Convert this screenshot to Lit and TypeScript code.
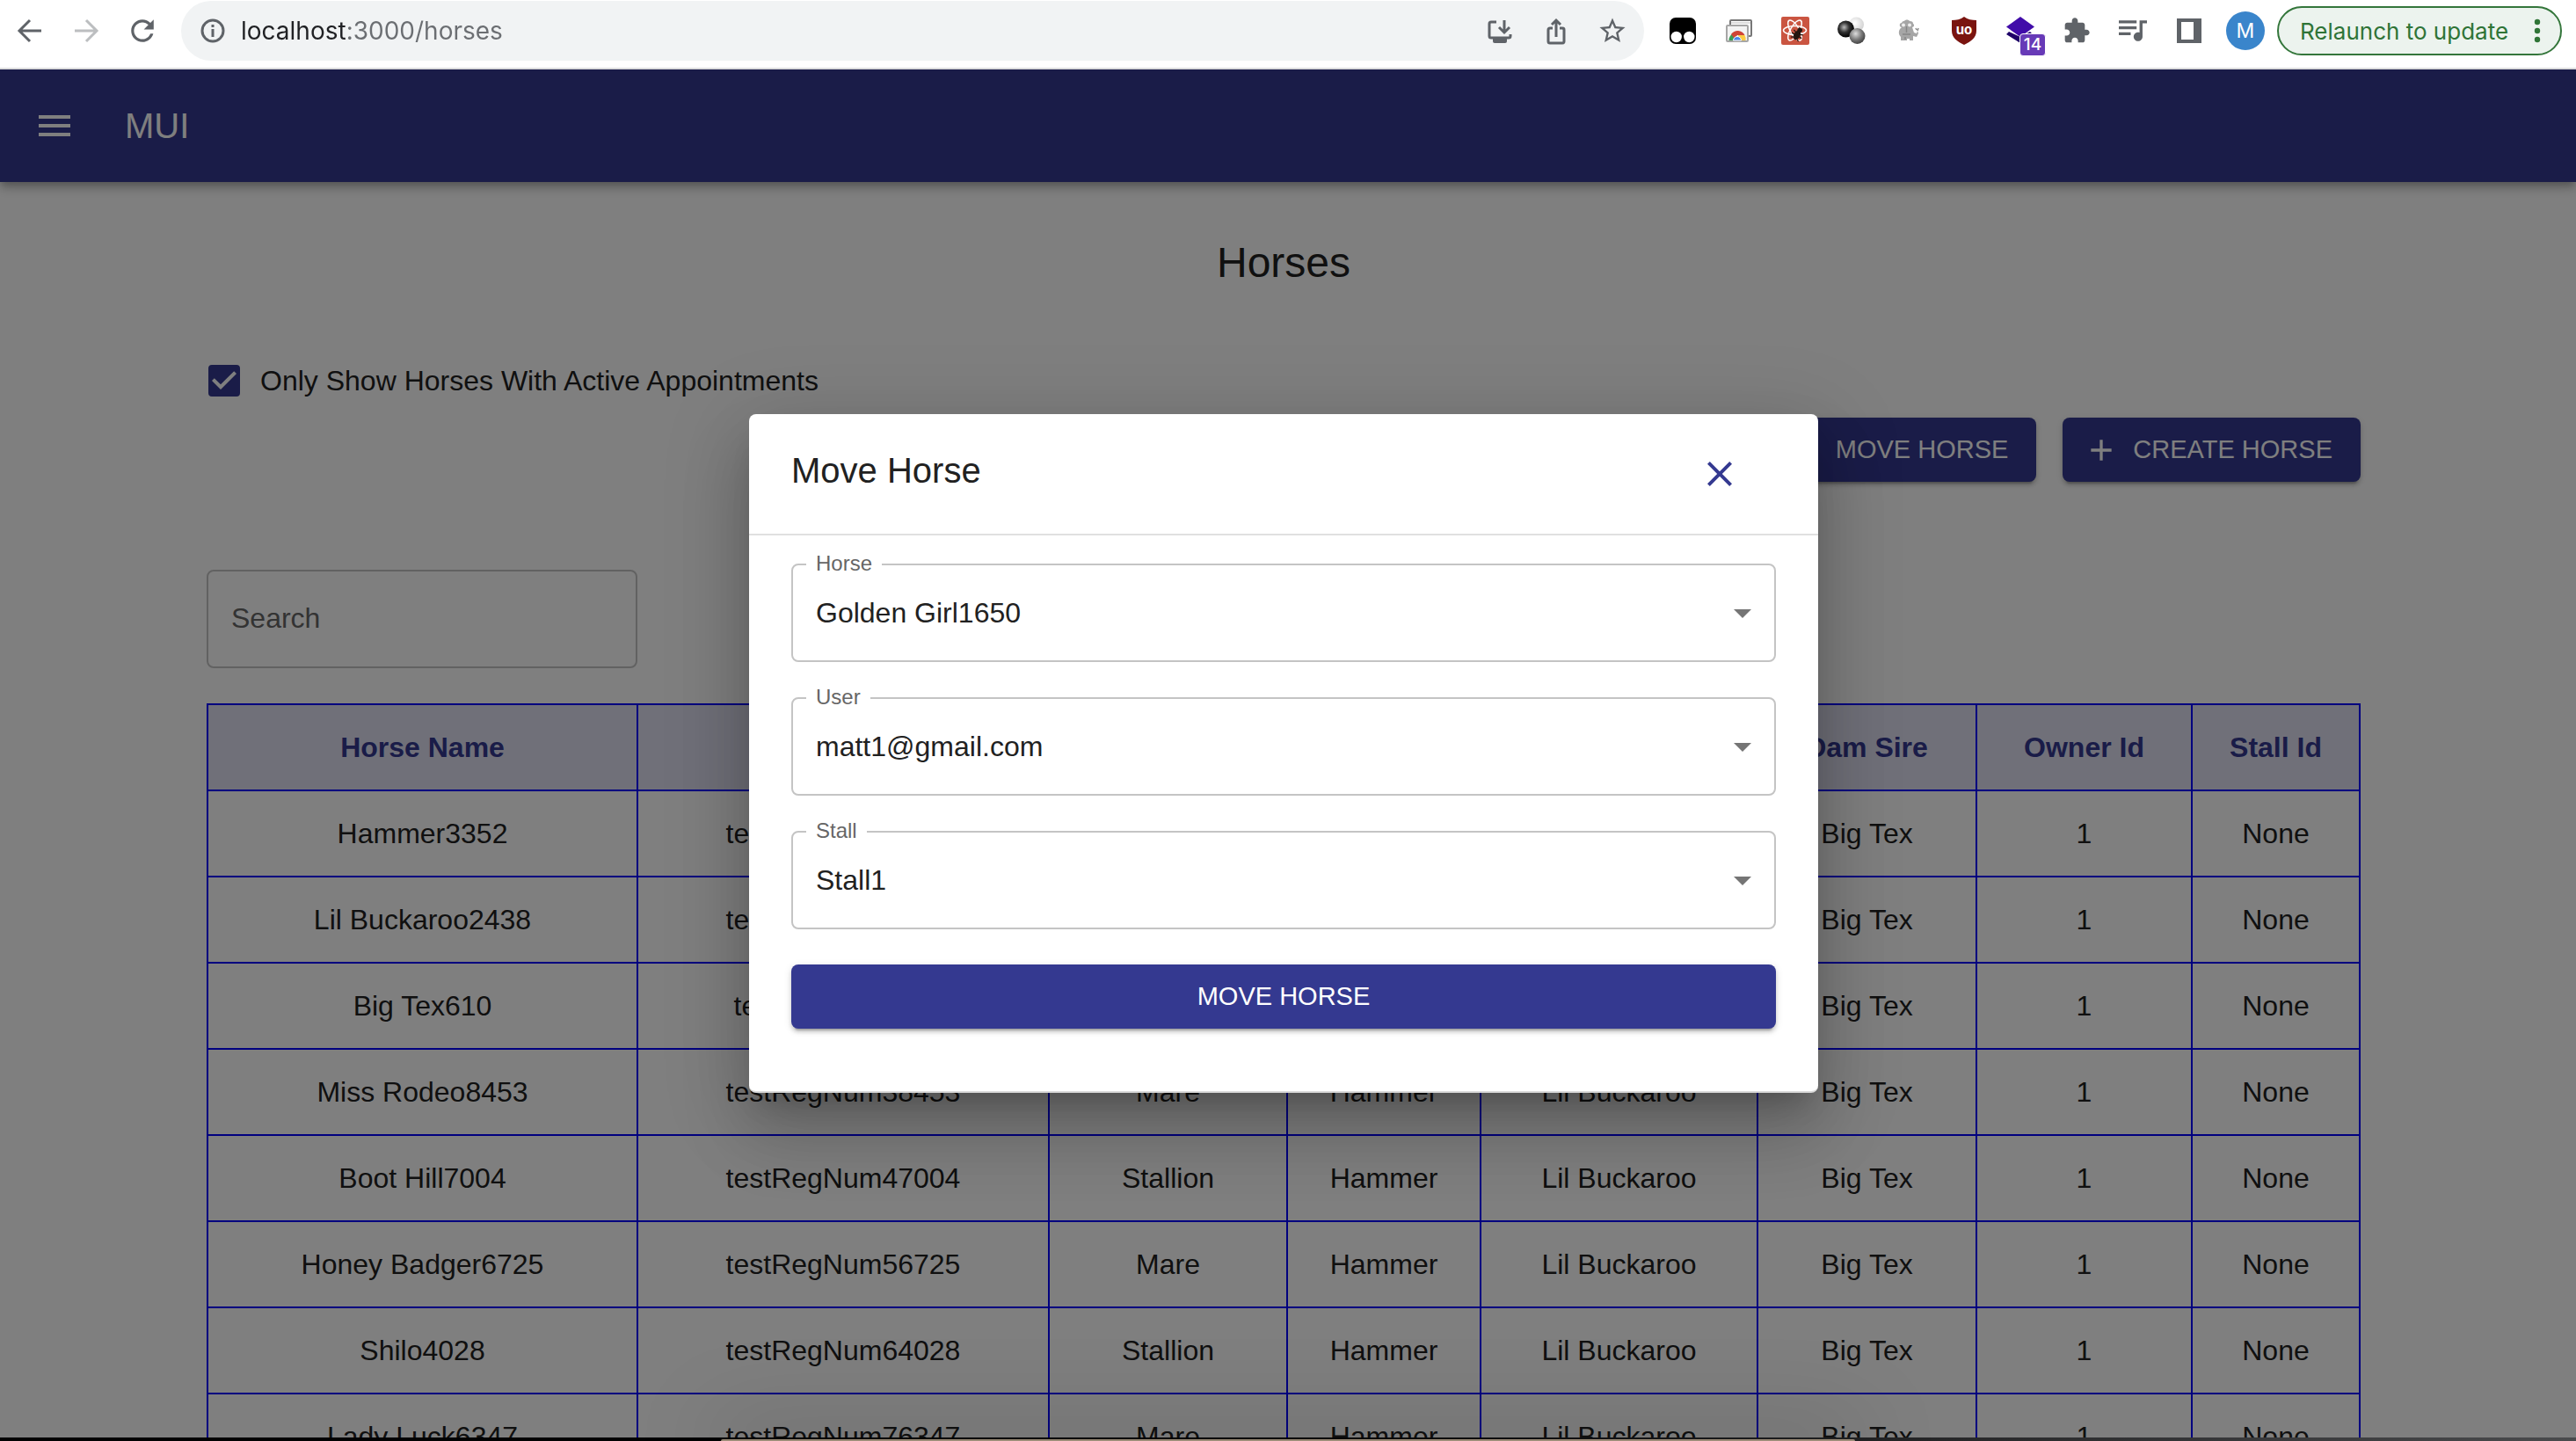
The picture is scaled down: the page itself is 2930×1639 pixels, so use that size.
import { LitElement, html, css, svg, type TemplateResult } from "lit";
import { customElement, state } from "lit/decorators.js";

interface Horse {
  name: string;
  registration: string;
  sex: string;
}

const HORSES: Horse[] = [
  { name: "Hammer3352", registration: "testRegNum03352", sex: "Stallion" },
  { name: "Lil Buckaroo2438", registration: "testRegNum12438", sex: "Mare" },
  { name: "Big Tex610", registration: "testRegNum2610", sex: "Stallion" },
  { name: "Miss Rodeo8453", registration: "testRegNum38453", sex: "Mare" },
  { name: "Boot Hill7004", registration: "testRegNum47004", sex: "Stallion" },
  { name: "Honey Badger6725", registration: "testRegNum56725", sex: "Mare" },
  { name: "Shilo4028", registration: "testRegNum64028", sex: "Stallion" },
  { name: "Lady Luck6347", registration: "testRegNum76347", sex: "Mare" },
];

const COLUMNS = [
  { title: "Horse Name", cls: "c-name" },
  { title: "Reg Num", cls: "c-reg" },
  { title: "Sex", cls: "c-sex" },
  { title: "Sire", cls: "c-sire" },
  { title: "Dam", cls: "c-dam" },
  { title: "Dam Sire", cls: "c-damsire" },
  { title: "Owner Id", cls: "c-owner" },
  { title: "Stall Id", cls: "c-stall" },
];

const icon = (viewBox: string, body: TemplateResult) =>
  html`<svg class="icon" viewBox=${viewBox} aria-hidden="true">${body}</svg>`;

const BOX = "0 0 32 32";

const icons = {
  back: icon(BOX, svg`<path d="M29 16H5M16 4 4 16l12 12" fill="none" stroke="currentColor" stroke-width="3"/>`),
  forward: icon(BOX, svg`<path d="M3 16h24M16 4l12 12-12 12" fill="none" stroke="currentColor" stroke-width="3"/>`),
  reload: icon("2 2 20 20", svg`<path fill="currentColor" d="M17.65 6.35C16.2 4.9 14.21 4 12 4c-4.42 0-7.99 3.58-7.99 8s3.57 8 7.99 8c3.73 0 6.84-2.55 7.73-6h-2.08c-.82 2.33-3.04 4-5.65 4-3.31 0-6-2.69-6-6s2.69-6 6-6c1.66 0 3.14.69 4.22 1.78L13 11h7V4z"/>`),
  info: icon(BOX, svg`<circle cx="16" cy="16" r="12" fill="none" stroke="currentColor" stroke-width="3"/><path d="M16 14v9M16 9v3" stroke="currentColor" stroke-width="3" fill="none"/>`),
  install: icon(BOX, svg`<path d="M12 6H6a2 2 0 0 0-2 2v14a2 2 0 0 0 2 2h20a2 2 0 0 0 2-2v-2" fill="none" stroke="currentColor" stroke-width="3"/><path d="M8 24h16v4a2 2 0 0 1-2 2H10a2 2 0 0 1-2-2z" fill="currentColor"/><path d="M21 4v13M15 12l6 6 6-6" fill="none" stroke="currentColor" stroke-width="3"/>`),
  share: icon(BOX, svg`<path d="M12 13H9a2 2 0 0 0-2 2v13a2 2 0 0 0 2 2h14a2 2 0 0 0 2-2V15a2 2 0 0 0-2-2h-3" fill="none" stroke="currentColor" stroke-width="3"/><path d="M16 23V5M11 9l5-5 5 5" fill="none" stroke="currentColor" stroke-width="3"/>`),
  star: icon("1 1 22 22", svg`<path fill="currentColor" d="M22 9.24l-7.19-.62L12 2 9.19 8.63 2 9.24l5.46 4.73L5.82 21 12 17.27 18.18 21l-1.63-7.03L22 9.24zM12 15.4l-3.76 2.27 1-4.28-3.32-2.88 4.38-.38L12 6.1l1.71 4.04 4.38.38-3.32 2.88 1 4.28L12 15.4z"/>`),
  monkey: icon(BOX, svg`<rect x="1" y="1" width="30" height="30" rx="7" fill="#000"/><circle cx="8.7" cy="23" r="6.2" fill="#fff"/><circle cx="23.3" cy="23" r="6.2" fill="#fff"/>`),
  windows: icon(BOX, svg`<rect x="6" y="4" width="24" height="18" rx="1" fill="#fff" stroke="#777" stroke-width="2"/><path d="M7 7h22" stroke="#ddd" stroke-width="2"/><rect x="2" y="10" width="24" height="18" rx="1" fill="#f3f3f3" stroke="#a6a6a6" stroke-width="2"/><path d="M4.500 27a9.500 9.500 0 0 1 4.500-8l5 8z" fill="#3a9b54"/><path d="M7 20a9 9 0 0 1 15.500 1H14l-3 4z" fill="#cf4436"/><path d="M15 21h7.500a9 9 0 0 1 1 6H15z" fill="#fbcb43"/><path d="M9.500 27a4.500 4.500 0 0 1 9 0z" fill="#4b86ea" stroke="#fff" stroke-width="1"/>`),
  atomBug: icon(BOX, svg`<rect width="32" height="32" rx="2" fill="#ca5541"/><g fill="none" stroke="#fff" stroke-width="1.500"><ellipse cx="15.500" cy="15.500" rx="13" ry="5"/><ellipse cx="15.500" cy="15.500" rx="13" ry="5" transform="rotate(60 15.500 15.500)"/><ellipse cx="15.500" cy="15.500" rx="13" ry="5" transform="rotate(120 15.500 15.500)"/></g><g transform="rotate(30 19 21)" fill="#24160f" stroke="#24160f" stroke-width="1.200"><circle cx="18" cy="15" r="2.200"/><ellipse cx="18" cy="21.500" rx="3" ry="5"/><path d="M12 18l4 1.500M24 18l-4 1.500M11.500 22h13M13 27l3-2M23 27l-3-2" fill="none"/></g>`),
  balls: icon(BOX, svg`<defs><radialGradient id="b1" cx=".4" cy=".4" r=".6"><stop offset="0" stop-color="#bbb"/><stop offset=".5" stop-color="#333"/><stop offset="1" stop-color="#000"/></radialGradient><radialGradient id="b2" cx=".4" cy=".4" r=".6"><stop offset="0" stop-color="#fff"/><stop offset="1" stop-color="#d4d4d4"/></radialGradient><radialGradient id="b3" cx=".4" cy=".35" r=".65"><stop offset="0" stop-color="#ddd"/><stop offset=".6" stop-color="#777"/><stop offset="1" stop-color="#444"/></radialGradient></defs><circle cx="21.500" cy="9" r="8.500" fill="url(#b2)"/><circle cx="9.500" cy="14" r="9.500" fill="url(#b1)"/><circle cx="22.500" cy="22" r="9" fill="url(#b3)"/>`),
  mammoth: icon(BOX, svg`<path d="M9 12c-3 0-3-5 0-5 1-2 2-2 3-2 1-2 5-2 6 0 3 0 4 1 4 3 2 1 1 4-1 4l2 6 3 1 1-3 1 3-2 4-4-1v5h-4v-2h-3v2H8v-4c-3-3-3-8 1-11z" fill="#a6a6a6"/><circle cx="11" cy="9.500" r="2" fill="#eee"/><circle cx="18" cy="9.500" r="2" fill="#eee"/><path d="M14.500 11v7M10 20h9M13 26v-3" stroke="#868686" stroke-width="1.500" fill="none"/><path d="M27 16l1-3M26 15l-1-2" stroke="#888" stroke-width="1.500"/>`),
  shield: icon(BOX, svg`<path d="M16 0c4 3 9 4 14 4v12c0 8-6 12-14 16C8 28 2 24 2 16V4c5 0 10-1 14-4z" fill="#7a1410"/><text x="16" y="20" text-anchor="middle" font-size="15" font-weight="700" font-family="Inter, sans-serif" fill="#fff">uo</text>`),
  diamond: icon(BOX, svg`<path d="M3 17 0 20l16 10 14-10-3-3-11 6z" fill="#1e0168"/><path d="M16 0l16 11.500L16 23 0 11.500z" fill="#410ca9"/>`),
  puzzle: icon("0 0 24 24", svg`<path fill="currentColor" d="M20.500 11H19V7c0-1.100-.9-2-2-2h-4V3.500C13 2.120 11.880 1 10.500 1S8 2.120 8 3.500V5H4c-1.100 0-1.990.9-1.990 2v3.800H3.500c1.490 0 2.700 1.210 2.700 2.700s-1.210 2.700-2.700 2.700H2V20c0 1.100.9 2 2 2h3.800v-1.500c0-1.490 1.210-2.700 2.700-2.700 1.490 0 2.700 1.210 2.700 2.700V22H17c1.100 0 2-.9 2-2v-4h1.500c1.380 0 2.500-1.120 2.500-2.500S21.880 11 20.500 11z"/>`),
  queue: icon("3 3.500 19 19", svg`<path fill="currentColor" d="M15 6H3v2h12V6zm0 4H3v2h12v-2zM3 16h8v-2H3v2zM17 6v8.180c-.31-.11-.65-.18-1-.18-1.660 0-3 1.340-3 3s1.340 3 3 3 3-1.340 3-3V8h3V6h-5z"/>`),
  panel: icon(BOX, svg`<path fill="currentColor" fill-rule="evenodd" d="M2 2h28v28H2zM7 6v20h14V6z"/>`),
  dots: html`<svg class="dots" viewBox="0 0 8 32" aria-hidden="true"><g fill="currentColor"><circle cx="4" cy="6" r="3.200"/><circle cx="4" cy="16" r="3.200"/><circle cx="4" cy="26" r="3.200"/></g></svg>`,
};

@customElement("browser-bar")
export class BrowserBar extends LitElement {
  static styles = css`
    :host {
      display: block;
      font-family: Inter, "Liberation Sans", sans-serif;
      background: #fff;
      border-bottom: 2px solid #dcdcdd;
    }
    .bar {
      display: flex;
      align-items: center;
      height: 68px;
      padding: 1px 16px 8px 2px;
      color: #5f6368;
    }
    button {
      font: inherit;
      color: inherit;
      background: none;
      border: 0;
      padding: 0;
      margin: 0;
      cursor: pointer;
    }
    .cell {
      display: flex;
      flex: none;
      align-items: center;
      justify-content: center;
      width: 64px;
      height: 64px;
      position: relative;
    }
    .cell:disabled {
      color: #bcbec0;
    }
    .icon {
      display: block;
      width: 32px;
      height: 32px;
    }
    .omnibox {
      display: flex;
      flex: 1;
      min-width: 0;
      align-items: center;
      height: 68px;
      margin: 0 12px;
      padding: 0 4px 0 14px;
      border-radius: 34px;
      background: #f1f3f4;
    }
    .site.cell {
      width: 44px;
    }
    .address {
      flex: 1;
      min-width: 0;
      height: 44px;
      margin: 0 0 0 10px;
      padding: 0;
      border: 0;
      outline: 0;
      font: inherit;
      font-size: 28px;
      color: transparent;
      background: linear-gradient(90deg, #202124 122px, #6b6e72 122px);
      -webkit-background-clip: text;
      background-clip: text;
    }
    .badge {
      position: absolute;
      left: 31px;
      top: 35px;
      width: 28px;
      height: 24px;
      border: 1px solid #fff;
      border-radius: 4px;
      background: #673ab7;
      color: #fff;
      font-size: 19px;
      font-weight: 500;
      line-height: 24px;
      text-align: center;
    }
    .avatar {
      display: block;
      width: 44px;
      border-radius: 50%;
      background: #3a85cb;
      color: #fff;
      font-size: 23px;
      line-height: 44px;
    }
    .relaunch {
      display: flex;
      align-items: center;
      justify-content: space-between;
      flex: none;
      box-sizing: border-box;
      width: 324px;
      height: 56px;
      margin-left: 4px;
      padding: 0 22px 0 24px;
      border: 2px solid #34763b;
      border-radius: 28px;
      background: #ecf3ee;
      color: #2f7437;
      font-size: 26px;
    }
    .dots {
      width: 8px;
      height: 32px;
    }
  `;

  render() {
    const extensions: [string, TemplateResult][] = [
      ["Userscripts", icons.monkey],
      ["Windows", icons.windows],
      ["Component debugger", icons.atomBug],
      ["Molecules", icons.balls],
      ["Mammoth", icons.mammoth],
      ["Content blocker", icons.shield],
    ];
    return html`
      <nav class="bar" aria-label="Browser">
        <button class="cell" aria-label="Back">${icons.back}</button>
        <button class="cell" aria-label="Forward" disabled>${icons.forward}</button>
        <button class="cell" aria-label="Reload">${icons.reload}</button>
        <div class="omnibox">
          <button class="cell site" aria-label="Site information">${icons.info}</button>
          <input class="address" type="text" aria-label="Address" .value=${"localhost:3000/horses"} />
          <button class="cell" aria-label="Install">${icons.install}</button>
          <button class="cell" aria-label="Share">${icons.share}</button>
          <button class="cell" aria-label="Bookmark">${icons.star}</button>
        </div>
        ${extensions.map(([label, glyph]) => html`<button class="cell" aria-label=${label}>${glyph}</button>`)}
        <button class="cell" aria-label="Layers">${icons.diamond}<span class="badge">14</span></button>
        <button class="cell" aria-label="Extensions">${icons.puzzle}</button>
        <button class="cell" aria-label="Media">${icons.queue}</button>
        <button class="cell" aria-label="Side panel">${icons.panel}</button>
        <button class="cell" aria-label="Profile"><span class="avatar">M</span></button>
        <button class="relaunch">Relaunch to update ${icons.dots}</button>
      </nav>
    `;
  }
}

@customElement("horse-table")
export class HorseTable extends LitElement {
  static styles = css`
    :host {
      display: block;
    }
    table {
      width: 100%;
      table-layout: fixed;
      border-collapse: collapse;
      font-size: 32px;
      line-height: 48px;
      text-align: center;
    }
    th,
    td {
      height: 96px;
      padding: 0;
      border: 2px solid #00f;
      white-space: nowrap;
      overflow: hidden;
    }
    th {
      background: #e0e0f2;
      color: #343990;
      font-weight: 700;
    }
    .c-name {
      width: 489px;
    }
    .c-reg {
      width: 468px;
    }
    .c-sex {
      width: 271px;
    }
    .c-sire {
      width: 220px;
    }
    .c-dam {
      width: 315px;
    }
    .c-damsire {
      width: 249px;
    }
    .c-owner {
      width: 245px;
    }
    .c-stall {
      width: 191px;
    }
  `;

  render() {
    return html`
      <table>
        <colgroup>
          ${COLUMNS.map((c) => html`<col class=${c.cls} />`)}
        </colgroup>
        <thead>
          <tr>
            ${COLUMNS.map((c) => html`<th scope="col">${c.title}</th>`)}
          </tr>
        </thead>
        <tbody>
          ${HORSES.map(
            (h) => html`<tr>
              <td>${h.name}</td>
              <td>${h.registration}</td>
              <td>${h.sex}</td>
              <td>Hammer</td>
              <td>Lil Buckaroo</td>
              <td>Big Tex</td>
              <td>1</td>
              <td>None</td>
            </tr>`,
          )}
        </tbody>
      </table>
    `;
  }
}

const buttonStyles = css`
  .contained {
    display: inline-flex;
    align-items: center;
    justify-content: center;
    height: 73px;
    padding: 0 32px;
    border: 0;
    border-radius: 8px;
    background: #343990;
    color: #fff;
    font: inherit;
    font-size: 29px;
    text-transform: uppercase;
    box-shadow:
      0 6px 2px -4px rgba(0, 0, 0, 0.2),
      0 4px 4px 0 rgba(0, 0, 0, 0.14),
      0 2px 10px 0 rgba(0, 0, 0, 0.12);
    cursor: pointer;
  }
`;

@customElement("move-horse-dialog")
export class MoveHorseDialog extends LitElement {
  static styles = [
    buttonStyles,
    css`
      :host {
        display: block;
        width: 1216px;
        max-width: 90%;
      }
      .paper {
        border-radius: 8px;
        border-bottom: 2px solid #dadada;
        background: #fff;
        color: #212121;
        box-shadow:
          0 22px 30px -14px rgba(0, 0, 0, 0.2),
          0 48px 76px 6px rgba(0, 0, 0, 0.14),
          0 18px 92px 16px rgba(0, 0, 0, 0.12);
      }
      .head {
        display: flex;
        justify-content: space-between;
        align-items: center;
        height: 136px;
        padding: 0 88px 0 48px;
        border-bottom: 2px solid #e0e0e0;
      }
      h2 {
        margin: 0 0 8px;
        font-size: 40px;
        font-weight: 400;
        line-height: 64px;
      }
      .close {
        display: block;
        padding: 0;
        border: 0;
        background: none;
        color: #343990;
        cursor: pointer;
      }
      .close svg {
        display: block;
        width: 48px;
        height: 48px;
      }
      form {
        display: flex;
        flex-direction: column;
        gap: 40px;
        padding: 32px 48px 71px;
      }
      .field {
        position: relative;
        height: 112px;
      }
      .field select {
        appearance: none;
        box-sizing: border-box;
        width: 100%;
        height: 100%;
        padding: 0 64px 0 26px;
        border: 2px solid #c4c4c4;
        border-radius: 8px;
        background: #fff;
        color: inherit;
        font: inherit;
        font-size: 32px;
      }
      .field label {
        position: absolute;
        left: 17px;
        top: -14px;
        padding: 0 11px;
        background: #fff;
        color: #666;
        font-size: 24px;
        line-height: 28px;
      }
      .arrow {
        position: absolute;
        right: 14px;
        top: 32px;
        width: 48px;
        height: 48px;
        color: #757575;
        pointer-events: none;
      }
    `,
  ];

  private field(id: string, label: string, value: string) {
    return html`
      <div class="field">
        <select id=${id}>
          <option>${value}</option>
        </select>
        <label for=${id}>${label}</label>
        <svg class="arrow" viewBox="0 0 24 24" aria-hidden="true"><path fill="currentColor" d="M7 10l5 5 5-5z" /></svg>
      </div>
    `;
  }

  render() {
    return html`
      <section class="paper" role="dialog" aria-modal="true" aria-labelledby="title">
        <header class="head">
          <h2 id="title">Move Horse</h2>
          <button class="close" aria-label="Close">
            <svg viewBox="0 0 24 24" aria-hidden="true">
              <path fill="currentColor" d="M19 6.410 17.590 5 12 10.590 6.410 5 5 6.410 10.590 12 5 17.590 6.410 19 12 13.410 17.590 19 19 17.590 13.410 12z" />
            </svg>
          </button>
        </header>
        <form @submit=${(e: Event) => e.preventDefault()}>
          ${this.field("horse", "Horse", "Golden Girl1650")}
          ${this.field("user", "User", "matt1@gmail.com")}
          ${this.field("stall", "Stall", "Stall1")}
          <button class="contained" type="submit">Move Horse</button>
        </form>
      </section>
    `;
  }
}

@customElement("app-root")
export class AppRoot extends LitElement {
  @state() private activeOnly = true;

  static styles = [
    buttonStyles,
    css`
      :host {
        display: flex;
        flex-direction: column;
        height: 100vh;
        overflow: hidden;
        background: #fff;
        font-family: "Liberation Sans", Arial, sans-serif;
      }
      .page {
        flex: 1;
        min-height: 0;
        position: relative;
        overflow: hidden;
        color: #212121;
      }
      .appbar {
        display: flex;
        align-items: center;
        gap: 56px;
        height: 128px;
        padding: 0 38px;
        background: #343990;
        color: #fff;
        box-shadow:
          0 4px 8px -2px rgba(0, 0, 0, 0.2),
          0 8px 10px 0 rgba(0, 0, 0, 0.14),
          0 2px 20px 0 rgba(0, 0, 0, 0.12);
      }
      .menu {
        padding: 0;
        border: 0;
        background: none;
        color: inherit;
      }
      .menu svg {
        display: block;
        width: 48px;
        height: 48px;
      }
      .brand {
        font-size: 40px;
        line-height: 64px;
      }
      main {
        display: flex;
        flex-direction: column;
        padding: 64px 245px 0 235px;
      }
      h1 {
        margin: 0 0 82px;
        font-size: 48px;
        font-weight: 400;
        line-height: 56px;
        text-align: center;
      }
      .filter {
        display: flex;
        align-items: center;
        gap: 23px;
        height: 48px;
        padding-left: 2px;
        font-size: 32px;
      }
      .tick {
        display: grid;
        flex: none;
        width: 36px;
        height: 36px;
      }
      .tick input,
      .tick svg {
        grid-area: 1 / 1;
        width: 36px;
        height: 36px;
        margin: 0;
      }
      .tick input {
        appearance: none;
        box-sizing: border-box;
        border: 4px solid #666;
        border-radius: 4px;
      }
      .tick input:checked {
        border-color: #343990;
        background: #343990;
      }
      .tick svg {
        color: #fff;
        pointer-events: none;
      }
      .actions {
        display: flex;
        justify-content: flex-end;
        gap: 30px;
        margin-top: 18px;
      }
      .actions .contained {
        gap: 16px;
        padding-left: 24px;
      }
      .actions svg {
        width: 40px;
        height: 40px;
      }
      .search {
        box-sizing: border-box;
        width: 20%;
        height: 112px;
        margin: 100px 0 40px;
        padding: 0 26px 2px;
        border: 2px solid #c4c4c4;
        border-radius: 8px;
        background: none;
        font: inherit;
        font-size: 32px;
      }
      .search::placeholder {
        color: #666;
        opacity: 1;
      }
      .backdrop {
        position: absolute;
        inset: 0;
        display: flex;
        align-items: center;
        justify-content: center;
        padding-right: 10px;
        background: rgba(0, 0, 0, 0.5);
      }
      .desktop {
        display: grid;
        grid-template-columns: 28fr 44fr 28fr;
        flex: none;
        height: 4px;
        position: relative;
        background: linear-gradient(90deg, #020203 50%, #4a4b4d);
      }
      .window {
        grid-column: 2;
        margin-top: 2px;
        border-radius: 4px 4px 0 0;
        background: #9c8c78;
        box-shadow: 0 0 100px 10px rgba(0, 0, 0, 0.32);
      }
    `,
  ];

  render() {
    const plus = html`<svg viewBox="0 0 24 24" aria-hidden="true"><path fill="currentColor" d="M19 13h-6v6h-2v-6H5v-2h6V5h2v6h6z" /></svg>`;
    return html`
      <browser-bar></browser-bar>
      <div class="page">
        <header class="appbar">
          <button class="menu" aria-label="Open menu">
            <svg viewBox="0 0 24 24" aria-hidden="true"><path fill="currentColor" d="M3 18h18v-2H3v2zm0-5h18v-2H3v2zm0-7v2h18V6H3z" /></svg>
          </button>
          <span class="brand">MUI</span>
        </header>
        <main>
          <h1>Horses</h1>
          <div class="filter">
            <span class="tick">
              <input id="active" type="checkbox" .checked=${this.activeOnly} @change=${(e: Event) => (this.activeOnly = (e.target as HTMLInputElement).checked)} />
              ${this.activeOnly
                ? html`<svg viewBox="3 3 18 18" aria-hidden="true"><path fill="currentColor" d="M10 17l-5-5 1.410-1.410L10 14.170l7.590-7.590L19 8z" /></svg>`
                : null}
            </span>
            <label for="active">Only Show Horses With Active Appointments</label>
          </div>
          <div class="actions">
            <button class="contained">${plus}Move Horse</button>
            <button class="contained">${plus}Create Horse</button>
          </div>
          <input class="search" type="text" placeholder="Search" aria-label="Search" />
          <horse-table></horse-table>
        </main>
        <div class="backdrop"><move-horse-dialog></move-horse-dialog></div>
      </div>
      <div class="desktop"><div class="window"></div></div>
    `;
  }
}
